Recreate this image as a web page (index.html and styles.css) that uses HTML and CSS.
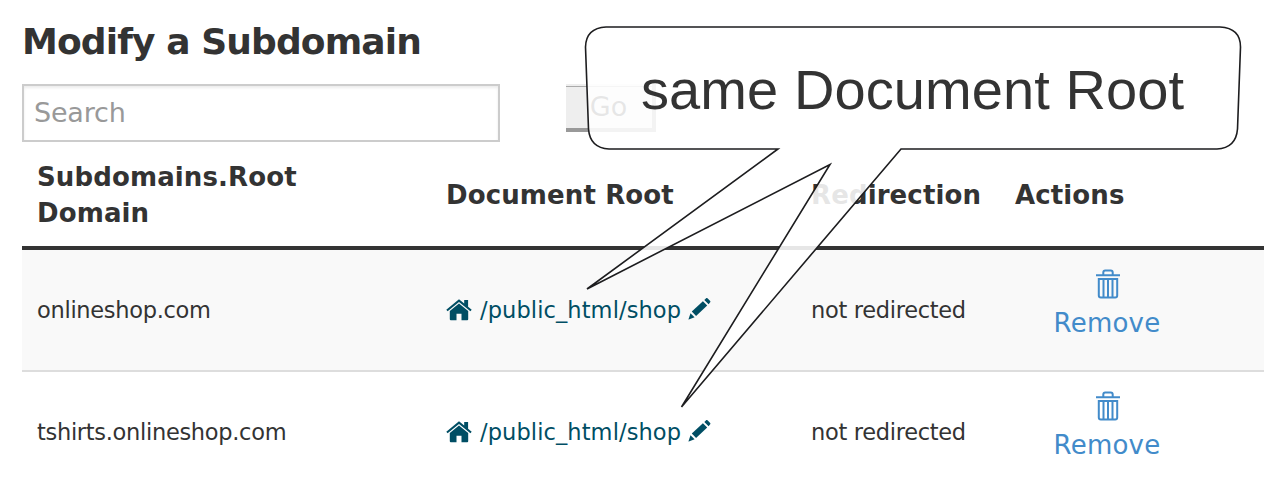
FILE: index.html
```html
<!DOCTYPE html>
<html lang="en">
<head>
<meta charset="utf-8">
<title>Modify a Subdomain</title>
<link rel="stylesheet" href="styles.css">
</head>
<body>
<svg class="symbols" aria-hidden="true">
  <symbol id="home" viewBox="0 0 26 22">
    <path d="M13 0.2L18.2 4.5V0.9H22.1V7.8L25.7 10.8L24.4 12.3L13 2.9L1.6 12.3L0.3 10.8Z"/>
    <path d="M13 4.4L22.2 12V20.2Q22.2 21.2 21.2 21.2H15.5V14.8H10.5V21.2H4.8Q3.8 21.2 3.8 20.2V12Z"/>
  </symbol>
  <symbol id="pencil" viewBox="0 0 24 24">
    <path d="M16.3 2.9L18.4 1.1Q19 0.7 19.5 1.2L22.2 4Q22.7 4.6 22.2 5.2L20.6 7.2Z"/>
    <path d="M14.9 4.2L19.2 8.5L8.1 18.9L3.8 14.6Z"/>
    <path d="M2.5 16.2L6.6 20.3L0.8 22.6Q0.4 22.7 0.5 22.2Z"/>
  </symbol>
  <symbol id="trash" viewBox="0 0 26 30">
    <path d="M1 6.2H25M8.3 6V3.5Q8.3 1.5 10.3 1.5H15.7Q17.7 1.5 17.7 3.5V6M3.8 10H22.2V26.5Q22.2 28.5 20.2 28.5H5.8Q3.8 28.5 3.8 26.5ZM8.5 10V28M13 10V28M17.5 10V28"/>
  </symbol>
</svg>
<main class="page">
  <h1 class="title">Modify a Subdomain</h1>
  <form class="search">
    <input class="search-input" type="text" placeholder="Search">
    <button class="go" type="button">Go</button>
  </form>
  <section class="table">
    <div class="row head">
      <div class="cell">Subdomains.Root Domain</div>
      <div class="cell">Document Root</div>
      <div class="cell">Redirection</div>
      <div class="cell">Actions</div>
    </div>
    <div class="row striped">
      <div class="cell">onlineshop.com</div>
      <div class="cell path"><svg class="home"><use href="#home"/></svg><span>/public_html/shop</span><svg class="pencil"><use href="#pencil"/></svg></div>
      <div class="cell">not redirected</div>
      <div class="cell"><a class="remove"><svg class="trash"><use href="#trash"/></svg><span>Remove</span></a></div>
    </div>
    <div class="row">
      <div class="cell">tshirts.onlineshop.com</div>
      <div class="cell path"><svg class="home"><use href="#home"/></svg><span>/public_html/shop</span><svg class="pencil"><use href="#pencil"/></svg></div>
      <div class="cell">not redirected</div>
      <div class="cell"><a class="remove"><svg class="trash"><use href="#trash"/></svg><span>Remove</span></a></div>
    </div>
  </section>
</main>
<svg class="callout" viewBox="0 0 1264 482">
  <path class="bubble" d="M606 27H1220Q1240.500 28 1240.500 47L1237.500 129Q1236 148 1217 149H901L681.500 407L830 164.500L587 289L778 149H609Q590 148 588.500 129L585.500 47Q586 28 606 27Z"/>
  <text class="callout-text" x="641" y="109" textLength="543">same Document Root</text>
</svg>
</body>
</html>
```
FILE: styles.css
```css
* { box-sizing: border-box; }
body {
  margin: 0;
  height: 482px;
  overflow: hidden;
  position: relative;
  background: #fff;
  color: #333;
  font-family: Verdana, "DejaVu Sans", sans-serif;
}
.symbols { position: absolute; width: 0; height: 0; }
.page { padding: 20px 0 0 22px; }
.title { margin: 0; height: 64px; font-size: 36px; line-height: 44px; letter-spacing: -.88px; white-space: nowrap; }
.search { display: flex; gap: 66px; height: 58px; }
.search-input {
  width: 478px;
  height: 58px;
  padding: 0 10px 1px;
  border: 2px solid #ccc;
  background: #fff;
  box-shadow: inset 0 2px 3px rgba(0, 0, 0, .08);
  font: 27px Verdana, "DejaVu Sans", sans-serif;
  letter-spacing: -.2px;
}
.search-input::placeholder { color: #999; }
.go {
  width: 90px;
  height: 48px;
  padding: 0 1px 0 0;
  border: 0 solid #999;
  border-width: 0 4px 4px 0;
  background: linear-gradient(#eee 2px, #aaa 2px, #aaa 3px, #eee 3px);
  color: #333;
  font: 27px Verdana, "DejaVu Sans", sans-serif;
}
.row {
  display: grid;
  grid-template-columns: 409px 365px 204px 264px;
  align-items: center;
  height: 122px;
  border-bottom: 2px solid #ddd;
  font-size: 22.5px;
  line-height: 27px;
  letter-spacing: -.3px;
}
.head { height: 108px; padding-top: 1px; border-bottom: 4px solid #333; font-size: 26px; line-height: 36px; font-weight: bold; letter-spacing: .12px; }
.head .cell:first-child { padding-right: 90px; }
.striped { background: #f9f9f9; }
.cell { padding-left: 15px; white-space: nowrap; }
.head .cell { white-space: normal; }
.path { display: flex; align-items: center; color: #004e64; letter-spacing: .1px; }
.home { width: 26px; height: 22px; margin: 0 9px 0 0; fill: #004e64; }
.path span { margin-left: -1px; }
.pencil { width: 24px; height: 24px; margin-left: 7px; margin-bottom: 3px; fill: #004e64; }
.remove { display: flex; flex-direction: column; align-items: center; width: 184px; margin-bottom: 11px; color: #428bca; font-size: 26px; line-height: 36px; letter-spacing: .25px; }
.trash { width: 26px; height: 30px; margin: 0 0 6px 1px; fill: none; stroke: #428bca; stroke-width: 2; }
.callout { position: absolute; inset: 0; width: 1264px; height: 482px; }
.bubble { fill: rgba(255, 255, 255, .88); stroke: #1d1d1f; stroke-width: 1.6; }
.callout-text { fill: #333; font: 56px "Liberation Sans", Arial, sans-serif; }
```
